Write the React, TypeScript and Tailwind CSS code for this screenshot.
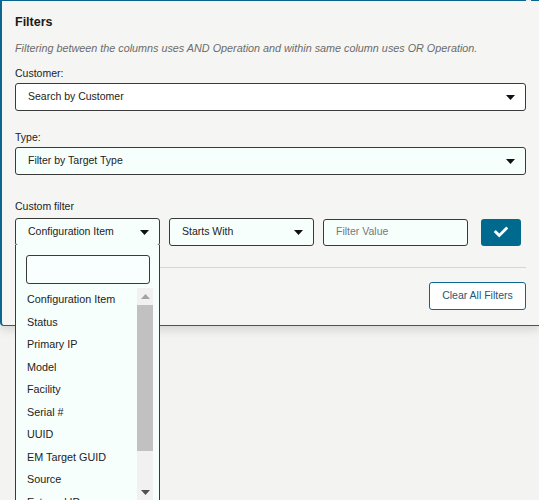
import { FaCheck } from "react-icons/fa";

const Caret = ({ className = "" }: { className?: string }) => (
  <svg width="9" height="5" viewBox="0 0 9 5" className={className}>
    <polygon points="0,0 9,0 4.5,5" fill="#111" />
  </svg>
);

const SelectBox = ({
  label,
  className = "",
}: {
  label: string;
  className?: string;
}) => (
  <div
    className={
      "flex h-[28px] items-center justify-between rounded-[3px] border border-[#3a3a3a] pl-[12px] pr-[10px] text-[10.5px] text-[#222] " +
      className
    }
  >
    <span>{label}</span>
    <Caret />
  </div>
);

const options = [
  "Configuration Item",
  "Status",
  "Primary IP",
  "Model",
  "Facility",
  "Serial #",
  "UUID",
  "EM Target GUID",
  "Source",
  "External ID",
];

export default function App() {
  return (
    <div className="relative min-h-[500px] overflow-hidden bg-[#f3f4f2] font-['Liberation_Sans',Arial,sans-serif]">
      {/* edge of the toolbar above */}
      <div className="flex h-px">
        <div className="w-[526px] rounded-br-[3px] border-b border-r border-[#0b6690]" />
        <div className="ml-[5px] flex-1 rounded-bl-[3px] border-b border-l border-[#0b6690]" />
      </div>

      {/* Filters panel */}
      <div className="relative rounded-bl-[4px] border-b border-l-2 border-[#0b6690] bg-[#f5f6f4] pb-[15px] pl-[13px] pr-[13px] pt-[13px] shadow-[0_4px_10px_rgba(0,0,0,0.12)]">
        <h2 className="text-[12.5px] font-bold leading-[16px] text-[#1a1a1a]">Filters</h2>
        <p className="mt-[11px] text-[10.8px] italic leading-[14px] text-[#6b6b6b]">
          Filtering between the columns uses AND Operation and within same column uses OR Operation.
        </p>

        <div className="mt-[11px] text-[10.5px] leading-[14px] text-[#222]">Customer:</div>
        <SelectBox label="Search by Customer" className="mt-[3px] bg-white" />

        <div className="mt-[19px] text-[10.5px] leading-[14px] text-[#222]">Type:</div>
        <SelectBox label="Filter by Target Type" className="mt-[3px] bg-[#f7fffd]" />

        <div className="mt-[24px] text-[10.5px] leading-[14px] text-[#222]">Custom filter</div>
        <div className="mt-[5px] flex items-center">
          <SelectBox label="Configuration Item" className="h-[27px] w-[145px] bg-[#f7fffd]" />
          <SelectBox label="Starts With" className="ml-[9px] h-[27px] w-[145px] bg-[#f7fffd]" />
          <div className="ml-[9px] flex h-[27px] w-[145px] items-center rounded-[3px] border border-[#3a3a3a] bg-[#f7fffd] pl-[12px] text-[10.5px] text-[#777]">
            Filter Value
          </div>
          <button className="ml-[13px] flex h-[27px] w-[40px] items-center justify-center rounded-[3px] bg-[#006a8e] text-white">
            <FaCheck size={14} />
          </button>
        </div>

        <div className="mt-[21px] h-px bg-[#d6d6d6]" />

        <div className="mt-[14px] flex justify-end">
          <button className="flex h-[28px] w-[97px] items-center justify-center rounded-[3px] border border-[#0b6690] bg-white text-[10.5px] text-[#1d5877]">
            Clear All Filters
          </button>
        </div>
      </div>

      {/* Open dropdown for the first select */}
      <div className="absolute left-[15px] top-[245px] h-[270px] w-[145px] border-x border-[#3a3a3a] bg-[#f7fffd]">
        <div className="ml-[10px] mt-[10px] h-[29px] w-[124px] rounded-[3px] border border-[#3a3a3a] bg-[#f9fffe]" />
        <div className="mt-[4px] flex">
          <ul className="flex-1 text-[10.8px] text-[#222]">
            {options.map((o) => (
              <li key={o} className="flex h-[22.5px] items-center pl-[11px]">
                {o}
              </li>
            ))}
          </ul>
          <div className="mr-[6px] flex h-[212px] w-[16px] flex-col items-center bg-[#f1f1f1]">
            <svg width="9" height="5" viewBox="0 0 9 5" className="mt-[6px]">
              <polygon points="4.5,0 9,5 0,5" fill="#a3a3a3" />
            </svg>
            <div className="mt-[6px] h-[146px] w-full bg-[#c1c1c1]" />
            <svg width="9" height="5" viewBox="0 0 9 5" className="mt-auto mb-[5px]">
              <polygon points="0,0 9,0 4.5,5" fill="#505050" />
            </svg>
          </div>
        </div>
      </div>
    </div>
  );
}
